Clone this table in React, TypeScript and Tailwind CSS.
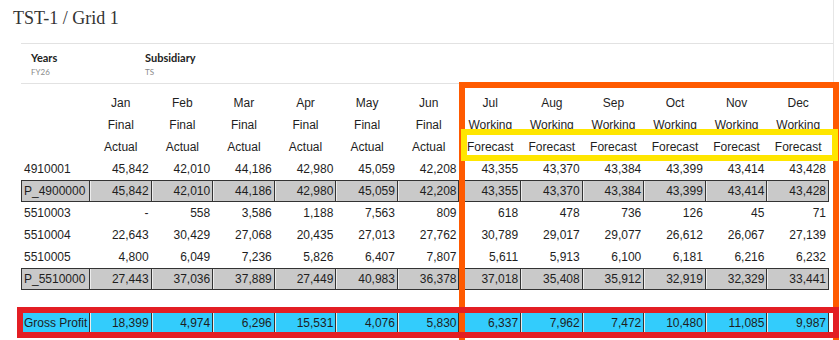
import React from "react";

const months = ["Jan", "Feb", "Mar", "Apr", "May", "Jun", "Jul", "Aug", "Sep", "Oct", "Nov", "Dec"];
const line2 = ["Final", "Final", "Final", "Final", "Final", "Final", "Working", "Working", "Working", "Working", "Working", "Working"];
const line3 = ["Actual", "Actual", "Actual", "Actual", "Actual", "Actual", "Forecast", "Forecast", "Forecast", "Forecast", "Forecast", "Forecast"];

type Row = { label: string; values: string[]; kind: "plain" | "total" | "gross" | "spacer" };

const rows: Row[] = [
  { label: "4910001", kind: "plain", values: ["45,842", "42,010", "44,186", "42,980", "45,059", "42,208", "43,355", "43,370", "43,384", "43,399", "43,414", "43,428"] },
  { label: "P_4900000", kind: "total", values: ["45,842", "42,010", "44,186", "42,980", "45,059", "42,208", "43,355", "43,370", "43,384", "43,399", "43,414", "43,428"] },
  { label: "5510003", kind: "plain", values: ["-", "558", "3,586", "1,188", "7,563", "809", "618", "478", "736", "126", "45", "71"] },
  { label: "5510004", kind: "plain", values: ["22,643", "30,429", "27,068", "20,435", "27,013", "27,762", "30,789", "29,017", "29,077", "26,612", "26,067", "27,139"] },
  { label: "5510005", kind: "plain", values: ["4,800", "6,049", "7,236", "5,826", "6,407", "7,807", "5,611", "5,913", "6,100", "6,181", "6,216", "6,232"] },
  { label: "P_5510000", kind: "total", values: ["27,443", "37,036", "37,889", "27,449", "40,983", "36,378", "37,018", "35,408", "35,912", "32,919", "32,329", "33,441"] },
  { label: "", kind: "spacer", values: [] },
  { label: "Gross Profit", kind: "gross", values: ["18,399", "4,974", "6,296", "15,531", "4,076", "5,830", "6,337", "7,962", "7,472", "10,480", "11,085", "9,987"] },
];

const gridRow = "grid grid-cols-[69px_repeat(12,minmax(0,1fr))] w-[808px] ml-[21px] h-[22px]";

function HeaderRow({ items }: { items: string[] }) {
  return (
    <div className={`${gridRow} leading-[22px]`}>
      <div />
      {items.map((t, i) => (
        <div key={i} className="text-center whitespace-nowrap overflow-hidden">{t}</div>
      ))}
    </div>
  );
}

function DataRow({ row }: { row: Row }) {
  if (row.kind === "spacer") return <div className="h-[22px]" />;
  if (row.kind === "plain") {
    return (
      <div className={`${gridRow} leading-[22px]`}>
        <div className="pl-[3px] whitespace-nowrap">{row.label}</div>
        {row.values.map((v, i) => (
          <div key={i} className="text-right pr-[3px] whitespace-nowrap">{v}</div>
        ))}
      </div>
    );
  }
  const bg = row.kind === "total" ? "bg-[#c9c9c9]" : "bg-[#33ccfc]";
  return (
    <div className={`${gridRow} border-y border-[#333] leading-[20px]`}>
      <div className={`${bg} border-l border-r border-[#333] pl-[2px] whitespace-nowrap overflow-hidden`}>{row.label}</div>
      {row.values.map((v, i) => (
        <div key={i} className={`${bg} border-l border-l-[#ececec] border-r border-r-[#333] text-right pr-[2px] whitespace-nowrap`}>
          {v}
        </div>
      ))}
    </div>
  );
}

export default function App() {
  return (
    <div className="relative w-[840px] h-[340px] overflow-hidden bg-white">
      <div className="w-[834px] h-[340px] border-r border-[#e6e6e6]">
        <div className="pl-[13px] pt-[7px] text-[18px] leading-[22px] text-[#333] font-['Liberation_Serif',serif]">
          TST-1 / Grid 1
        </div>
        <div className="ml-[21px] mt-[14px] w-[812px] border-y border-[#e2e2e2] flex pl-[10px] pt-[7px] pb-[6px] font-['Lato',sans-serif]">
          <div className="w-[114px] flex flex-col gap-[3px]">
            <div className="text-[11px] leading-[13px] font-bold text-[#222]">Years</div>
            <div className="text-[8px] leading-[10px] text-[#8a8a8a]">FY26</div>
          </div>
          <div className="flex flex-col gap-[3px]">
            <div className="text-[11px] leading-[13px] font-bold text-[#222]">Subsidiary</div>
            <div className="text-[8px] leading-[10px] text-[#8a8a8a]">TS</div>
          </div>
        </div>
        <div className="mt-[8px] text-[12px] text-[#1e1e1e] font-['Liberation_Sans',Arial,sans-serif]">
          <HeaderRow items={months} />
          <HeaderRow items={line2} />
          <HeaderRow items={line3} />
          {rows.map((r, i) => (
            <DataRow key={i} row={r} />
          ))}
        </div>
      </div>

      <div className="absolute left-[459px] top-[82px] w-[380px] h-[300px] border-[6px] border-[#ff5a00]" />
      <div className="absolute left-[461px] top-[129px] w-[377px] h-[32px] border-[6px] border-[#ffe600]" />
      <div className="absolute left-[17px] top-[307px] w-[822px] h-[31px] border-[6px] border-[#e31e24]" />
    </div>
  );
}
